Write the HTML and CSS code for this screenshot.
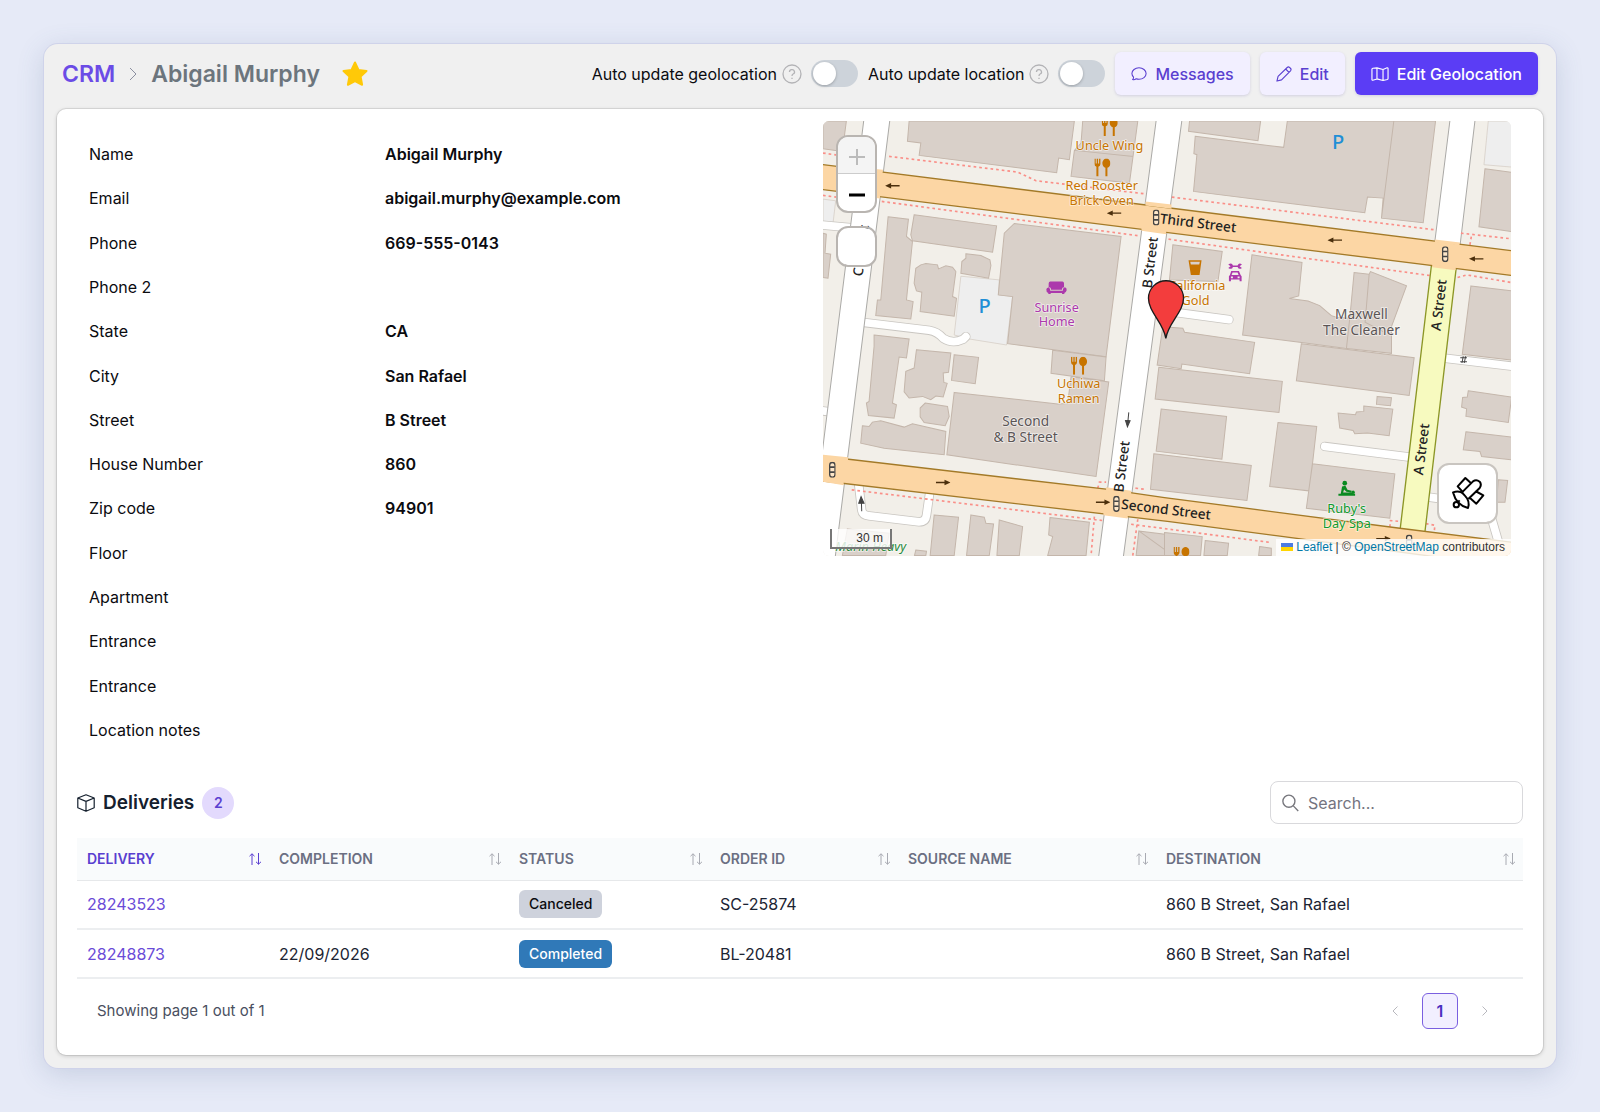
FILE: index.html
```html
<!DOCTYPE html>
<html lang="en">
<head>
<meta charset="utf-8">
<title>CRM - Abigail Murphy</title>
<link rel="stylesheet" href="styles.css">
</head>
<body>
<svg class="defs" aria-hidden="true">
  <symbol id="sort" viewBox="0 0 12 12"><path class="up" d="M3 12V.8M.5 3.200 3 .8l2.500 2.400"/><path class="down" d="M9.500 0v11.200M7 8.800l2.500 2.400L12 8.800"/></symbol>
  <symbol id="fork" viewBox="0 0 48 54"><path d="M0 0h4v15h3V0h4v15h3V0h4v17q0 6-6 8v29H6V25q-6-2-6-8zM36 0c8 0 12 8 12 15 0 6-4 11-9 13v26h-6V28c-5-2-9-7-9-13C24 8 28 0 36 0z"/></symbol>
  <symbol id="signal" viewBox="0 0 20 48"><rect x="2" y="2" width="16" height="44" rx="8" fill="#fff" fill-opacity=".4" stroke="#444" stroke-width="4"/><path d="M3 16h14M3 31h14" stroke="#444" stroke-width="5"/></symbol>
  <symbol id="arrow" viewBox="0 0 44 20"><path d="M12 10h32" stroke="#4b2f0c" stroke-width="4"/><path d="M0 10 18 2v16z" fill="#4b2f0c"/></symbol>
</svg>
<main class="shell">
  <header class="topbar">
    <nav class="crumbs" aria-label="Breadcrumb">
      <a class="crumb-link" href="#">CRM</a>
      <svg class="crumb-sep" viewBox="0 0 8 14"><path d="m1 1 6 6-6 6"/></svg>
      <h1 class="crumb-title">Abigail Murphy</h1>
      <svg class="star" viewBox="0 0 26 26"><path d="M13 1.500 16.500 9l8 1-5.900 5.600 1.500 8.200L13 20l-7.100 3.800 1.500-8.200L1.500 10l8-1z"/></svg>
    </nav>
    <div class="actions">
      <div class="switch-field">
        <label for="geo">Auto update geolocation</label>
        <svg class="help" viewBox="0 0 20 20"><circle cx="10" cy="10" r="9"/><path d="M7.500 8a2.500 2.300 0 1 1 3.600 2q-1.100.600-1.100 1.900M10 13.700v1.200"/></svg>
        <input class="switch" type="checkbox" id="geo">
      </div>
      <div class="switch-field">
        <label for="loc">Auto update location</label>
        <svg class="help" viewBox="0 0 20 20"><circle cx="10" cy="10" r="9"/><path d="M7.500 8a2.500 2.300 0 1 1 3.600 2q-1.100.600-1.100 1.900M10 13.700v1.200"/></svg>
        <input class="switch" type="checkbox" id="loc">
      </div>
      <button class="btn" type="button"><svg class="btn-icon" viewBox="0 0 18 16"><path d="M1.800 14.300c.8-.8 1.200-1.700 1.100-2.800C1.700 10.300 1 9 1 7.500 1 3.900 4.600 1 9 1s8 2.900 8 6.500S13.400 14 9 14c-1.100 0-2.200-.2-3.200-.6-1.200.9-2.600 1.300-4 .9z"/></svg>Messages</button>
      <button class="btn" type="button"><svg class="btn-icon" viewBox="0 0 17 17"><path d="M1 16l1.200-5L11.900 1.600q1.300-1.200 2.700.1l.7.700q1.300 1.400.1 2.700L5.900 14.700zM10.300 3.200l3.500 3.500"/></svg>Edit</button>
      <button class="btn btn-primary" type="button"><svg class="btn-icon map-glyph" viewBox="0 0 19 15"><path d="M1 2.500q0-1 1-1.100L6.300 1l6.400 1.700L17 1q1-.2 1 .8v10.400q0 .8-.8 1.100l-4.500 1-6.400-1.600-4.400 1.400Q1 14.200 1 13.300zM6.300 1v11.700M12.700 2.700v11.600"/></svg>Edit Geolocation</button>
    </div>
  </header>

  <section class="panel">
    <div class="overview">
      <dl class="details">
        <div class="field"><dt>Name</dt><dd>Abigail Murphy</dd></div>
        <div class="field"><dt>Email</dt><dd>abigail.murphy@example.com</dd></div>
        <div class="field"><dt>Phone</dt><dd>669-555-0143</dd></div>
        <div class="field"><dt>Phone 2</dt><dd></dd></div>
        <div class="field"><dt>State</dt><dd>CA</dd></div>
        <div class="field"><dt>City</dt><dd>San Rafael</dd></div>
        <div class="field"><dt>Street</dt><dd>B Street</dd></div>
        <div class="field"><dt>House Number</dt><dd>860</dd></div>
        <div class="field"><dt>Zip code</dt><dd>94901</dd></div>
        <div class="field"><dt>Floor</dt><dd></dd></div>
        <div class="field"><dt>Apartment</dt><dd></dd></div>
        <div class="field"><dt>Entrance</dt><dd></dd></div>
        <div class="field"><dt>Entrance</dt><dd></dd></div>
        <div class="field"><dt>Location notes</dt><dd></dd></div>
      </dl>

      <div class="map">
        <svg class="map-canvas" viewBox="12 9 2061 1302">
          <g class="lot">
            <path d="M12 243 50 248 42 315 12 312zM425 474 540 485 538 530 580 535 562 680 450 662 405 650zM2005 9H2075V147L1992 140z"/>
          </g>
          <g class="building">
            <path d="M12 9H82L70 100 12 92zM270 9 265 70 305 75 300 112 712 164 718 120 750 125 765 9zM790 9 785 75 765 97 755 175 930 195 955 9zM765 97 942 115"/>
            <path d="M12 345 22 348 18 405 35 408 27 480 12 478z"/>
            <path d="M207 296 268 303 262 355 280 370 262 545 282 550 275 602 170 592 175 545 185 545z"/>
            <path d="M285 290 532 323 520 402 280 368 275 350z"/>
            <path d="M305 440 320 436 355 440 358 452 380 443 400 447 410 460 400 535 412 540 405 594 303 580 308 522 292 518 285 495 290 450z"/>
            <path d="M440 407 485 412 512 425 515 442 508 480 425 465 428 430 440 420z"/>
            <path d="M585 316 905 355 860 715 565 676 580 535 537 530 555 345z"/>
            <path d="M700 696 860 716 855 787 695 765zM405 822 715 857 745 855 755 775 868 791 830 1074 383 1009z"/>
            <path d="M165 650 270 662 262 719 240 716 220 854 232 859 225 899 148 891 142 854 150 849 165 684z"/>
            <path d="M292 694 395 704 388 762 372 764 374 792 384 795 372 836 350 833 335 844 310 834 270 839 255 820 260 759 285 749z"/>
            <path d="M405 709 478 717 468 796 397 786z"/>
            <path d="M318 854 385 864 390 894 378 922 315 912 303 895 303 869z"/>
            <path d="M130 922 150 924 160 911 185 907 255 926 280 916 380 939 375 1009 195 989 125 974z"/>
            <path d="M345 1189 418 1196 405 1311H333zM455 1189 495 1196 500 1214 523 1216 510 1311H442zM540 1204 610 1224 600 1311H533zM692 1197 810 1211 800 1311H685L700 1254 688 1249zM958 1237 1060 1250 1050 1311H950zM958 1237 1045 1300M85 1231 210 1244 200 1311H70zM290 1294 322 1298 320 1311H286z"/>
            <path d="M1030 625 1090 630 1095 642 1305 672 1290 766 1087 737 1085 751 1013 740z"/>
            <path d="M1018 747 1388 789 1378 882 1007 842zM1025 872 1221 894 1207 1022 1010 998zM1003 1006 1295 1041 1282 1146 993 1112z"/>
            <path d="M1375 912 1491 924 1478 1039 1467 1117 1350 1104zM1478 1036 1725 1066 1710 1199 1460 1169z"/>
            <path d="M1297 410 1447 433 1437 533 1409 541 1465 548 1500 562 1535 592 1550 597 1590 600 1603 463 1648 468 1652 460 1760 503 1715 625V705L1575 690 1440 672 1269 650z"/>
            <path class="edge" d="M1648 468 1636 612 1690 640M1580 690 1590 600"/>
            <path d="M1445 676 1783 718 1768 831 1430 787z"/>
            <path d="M1672 834 1715 838 1712 862 1670 858zM1632 863 1719 872 1708 952 1643 944 1605 946 1600 936 1560 929 1555 884 1607 889 1610 881 1632 879z"/>
            <path d="M1953 503 2075 518V725L1927 708z"/>
            <path d="M1945 817 2075 836 2065 912 1938 894 1940 871 1925 866 1928 837 1942 836zM1938 940 2075 956V1024L1985 1014 1980 999 1930 994zM2035 1084 2063 1086 2055 1151H2030z"/>
            <path d="M1110 9 1107 40 1315 68 1323 9zM1127 55 1392 88 1403 9H1847L1810 314 1685 300 1690 240 1643 237 1635 284 1122 220 1132 110 1123 107zM1722 9 1685 300"/>
            <path d="M1995 152 2075 163V340L1977 326z"/>
            <path d="M1060 380 1208 400 1195 490 1050 485z"/>
            <path d="M1035 1242 1148 1254 1143 1311H1035zM1157 1266 1227 1274 1223 1311H1153zM1320 1284 1355 1289V1311H1317z"/>
          </g>
          <g class="minor-case"><path d="M130 612 330 636Q355 640 372 660 400 678 432 663L440 655"/><path d="M1035 578 1228 604M1515 984 1770 1016M1860 718 2080 744M1800 1132 1900 1146M2015 1200 2050 1320M118 1090 128 1175Q130 1190 150 1192L300 1210Q320 1210 322 1190L332 1120M0 320 110 330M0 876 60 884"/></g>
          <g class="minor"><path d="M130 612 330 636Q355 640 372 660 400 678 432 663L440 655"/><path d="M1035 578 1228 604M1515 984 1770 1016M1860 718 2080 744M1800 1132 1900 1146M2015 1200 2050 1320M118 1090 128 1175Q130 1190 150 1192L300 1210Q320 1210 322 1190L332 1120M0 320 110 330M0 876 60 884"/></g>
          <g class="street">
            <path d="M135 0H213L48 1320H-30zM1011 0H1088L911 1320H837zM1891 0H1966L1920 385H1843z"/>
          </g>
          <g class="foot">
            <path d="M12 105 60 112M210 115 595 162 650 188 975 227M12 232 60 238M188 250 960 353M1057 237 1845 335M1047 363 1830 472M1923 345 2075 362M1950 380 1955 350M1913 478 1940 470 2075 493"/>
            <path d="M98 1114 850 1206M835 1109 840 1091 860 1091M948 1109 975 1112M935 1217 1355 1272M825 1194 815 1311M955 1202 940 1311M1710 1225 1712 1206 1735 1208M1818 1215 1845 1220 1843 1240"/>
          </g>
          <path class="yellow" d="M1836 430 1740 1240 1814 1250 1910 440z"/>
          <path class="orange" d="M0 138 2085 399V473L0 213zM0 1012 860 1112 1035 1137 1740 1229 2085 1272V1346L1375 1252 1050 1209 0 1086z"/>
          <path class="junction" d="M1056 259V272L978 262V250zM1920 373 1918 382 1845 373V364zM1040 336 1040 348 966 338V328zM1908 446 1907 456 1837 447V438zM935 1117V1130L860 1118V1106zM925 1189V1200L852 1190V1180zM192 155 190 166 118 157V148zM183 230V241L108 232V222zM87 1016V1028L12 1019V1009zM74 1088V1100L12 1090V1082z"/>

          <use href="#arrow" x="198" y="193" width="44" height="20"/>
          <use href="#arrow" x="862" y="275" width="44" height="20"/>
          <use href="#arrow" x="1523" y="356" width="44" height="20"/>
          <use href="#arrow" x="1947" y="412" width="44" height="20"/>
          <use href="#arrow" x="-394" y="-1102" width="44" height="20" transform="rotate(180)"/>
          <use href="#arrow" x="-873" y="-1161" width="44" height="20" transform="rotate(180)"/>
          <use href="#arrow" x="-1713" y="-1270" width="44" height="20" transform="rotate(180)"/>
          <path class="tick" d="M928 882 925 912M918 906 924 925 932 907zM128 1178 127 1150M119 1154 126 1134 135 1154zM1921 718H1941M1921 730H1941M1926 734 1930 714M1933 734 1937 714"/>
          <use href="#signal" x="1000" y="274" width="20" height="48"/>
          <use href="#signal" x="1866" y="384" width="20" height="48"/>
          <use href="#signal" x="30" y="1030" width="20" height="48"/>
          <use href="#signal" x="881" y="1132" width="20" height="48"/>
          <use href="#signal" x="1758" y="1248" width="20" height="48"/>

          <g class="food">
            <use href="#fork" x="847" y="0" width="48" height="54"/>
            <use href="#fork" x="825" y="121" width="48" height="54"/>
            <use href="#fork" x="755" y="715" width="48" height="54"/>
            <use href="#fork" x="1062" y="1285" width="48" height="54"/>
            <path d="M1107 426H1146L1140 470H1114zM1112 431 1114 439H1139L1141 431z" fill-rule="evenodd"/>
          </g>
          <g class="shop">
            <path d="M693 490H729Q734 490 734 496V508H738Q742 508 742 516 740 522 735 524V527H728V524H694V527H687V524Q680 521 681 513 682 508 688 508V496Q688 490 693 490z"/>
            <path class="seat-line" d="M690 508Q694 509 694 516H729Q729 509 733 508"/>
            <path d="M1226 439Q1237 432 1240 442H1254Q1258 432 1267 439L1260 444 1267 449Q1258 456 1254 446H1240Q1237 456 1226 449L1233 444zM1235 458H1258L1263 470 1266 474V489H1260V484H1234V489H1228V474L1231 470zM1239 463 1236 470H1257L1254 463zM1234 475V480H1240V475zM1254 475V480H1260V475z" fill-rule="evenodd"/>
          </g>
          <g class="spa"><circle cx="1575" cy="1094" r="7"/><path d="M1567 1104 1577 1102 1583 1114 1596 1117 1595 1122 1580 1120 1573 1113 1570 1122H1592L1606 1126V1132H1556V1126H1563z"/><circle cx="1600" cy="1121" r="5"/></g>

          <g class="poi food-text">
            <text x="870" y="96">Uncle Wing</text>
            <text x="847" y="216">Red Rooster</text>
            <text x="847" y="260">Brick Oven</text>
            <text x="778" y="809">Uchiwa</text>
            <text x="778" y="853">Ramen</text>
            <text x="1132" y="515">California</text>
            <text x="1128" y="559">Gold</text>
          </g>
          <g class="poi shop-text"><text x="712" y="580">Sunrise</text><text x="712" y="624">Home</text></g>
          <g class="poi spa-text"><text x="1581" y="1183">Ruby's</text><text x="1581" y="1227">Day Spa</text></g>
          <g class="poi place"><text x="619" y="924">Second</text><text x="619" y="972">&amp; B Street</text><text x="1625" y="603">Maxwell</text><text x="1625" y="651">The Cleaner</text></g>
          <g class="parking"><text x="496" y="583">P</text><text x="1555" y="93">P</text></g>
          <text class="poi park" x="155" y="1297">Marin Heavy</text>
          <g class="road-name">
            <text transform="translate(1134 329) rotate(7)">Third Street</text>
            <text transform="translate(1038 1187) rotate(7)">Second Street</text>
            <text transform="translate(1006 435) rotate(-83)">B Street</text>
            <text transform="translate(921 1046) rotate(-83)">B Street</text>
            <text transform="translate(1871 562) rotate(-83)">A Street</text>
            <text transform="translate(1819 994) rotate(-83)">A Street</text>
            <text transform="translate(140 399) rotate(-83)">C Street</text>
          </g>
          <path class="pin" d="M1039 660C1032 613 987 582 987 540A52 52 0 0 1 1092 540C1092 582 1046 613 1039 660z"/>
        </svg>
        <div class="zoom-box">
          <button class="zoom-btn is-off" type="button" aria-label="Zoom in"><svg viewBox="0 0 16 16"><path d="M8 0v16M0 8h16"/></svg></button>
          <button class="zoom-btn" type="button" aria-label="Zoom out"><svg viewBox="0 0 16 16"><path d="M0 8h16"/></svg></button>
        </div>
        <button class="blank-box" type="button" aria-label="Fullscreen"></button>
        <button class="sat-box" type="button" aria-label="Satellite view"><svg viewBox="860 417 102 102"><path d="M897 467 880 448 903 423 922 440M893 466 926 433Q936 426 946 434 953 443 946 453L912 486M933 462 957 475 936 500 917 483"/><path d="M866 466Q888 458 901 475 918 492 911 513 876 505 866 466z"/><circle cx="876" cy="503" r="8"/><path d="M880 496 886 490"/></svg></button>
        <div class="scale">30 m</div>
        <div class="credit"><svg class="flag" viewBox="0 0 12 8"><path fill="#4c7be1" d="M0 0h12v4H0z"/><path fill="#ffd500" d="M0 4h12v4H0z"/></svg> <a href="#">Leaflet</a> | © <a href="#">OpenStreetMap</a> contributors</div>
      </div>
    </div>

    <section class="deliveries">
      <div class="list-head">
        <svg class="box-icon" viewBox="0 0 18 18"><path d="M9 .8 17.200 4v9.700L9 17.200.8 13.700V4zM.8 4 9 7.400 17.200 4M9 7.400v9.800"/></svg>
        <h2 class="list-title">Deliveries</h2>
        <span class="count">2</span>
        <div class="search">
          <svg class="search-icon" viewBox="0 0 16 17"><circle cx="6.500" cy="6.800" r="5.700"/><path d="m10.700 11.200 4.600 4.800"/></svg>
          <input class="search-input" type="text" placeholder="Search..." aria-label="Search deliveries">
        </div>
      </div>
      <table class="table">
        <colgroup><col class="c-delivery"><col class="c-completion"><col class="c-status"><col class="c-order"><col class="c-source"><col></colgroup>
        <thead>
          <tr>
            <th><button class="sort is-active" type="button">DELIVERY<svg><use href="#sort"/></svg></button></th>
            <th><button class="sort" type="button">COMPLETION<svg><use href="#sort"/></svg></button></th>
            <th><button class="sort" type="button">STATUS<svg><use href="#sort"/></svg></button></th>
            <th><button class="sort" type="button">ORDER ID<svg><use href="#sort"/></svg></button></th>
            <th><button class="sort" type="button">SOURCE NAME<svg><use href="#sort"/></svg></button></th>
            <th><button class="sort" type="button">DESTINATION<svg><use href="#sort"/></svg></button></th>
          </tr>
        </thead>
        <tbody>
          <tr><td><a href="#">28243523</a></td><td></td><td><span class="tag">Canceled</span></td><td>SC-25874</td><td></td><td>860 B Street, San Rafael</td></tr>
          <tr><td><a href="#">28248873</a></td><td>22/09/2026</td><td><span class="tag tag-done">Completed</span></td><td>BL-20481</td><td></td><td>860 B Street, San Rafael</td></tr>
        </tbody>
      </table>
      <footer class="pager">
        <span>Showing page 1 out of 1</span>
        <div class="pages">
          <button class="page" type="button" aria-label="Previous"><svg viewBox="0 0 6 10"><path d="M5.500.5 1 5l4.500 4.500"/></svg></button>
          <button class="page is-current" type="button">1</button>
          <button class="page" type="button" aria-label="Next"><svg viewBox="0 0 6 10"><path d="M.5.5 5 5 .5 9.500"/></svg></button>
        </div>
      </footer>
    </section>
  </section>
</main>
</body>
</html>
```
FILE: styles.css
```css
* { box-sizing: border-box; }
body {
  margin: 0;
  padding: 44px;
  background: #e6eaf7;
  color: #0b0b0f;
  font: 16px/24px Inter, sans-serif;
}
button, input { font: inherit; color: inherit; }
button { border: 0; padding: 0; background: none; }
a { text-decoration: none; color: #6a4bd8; }
svg { display: block; fill: none; stroke: currentColor; flex: none; }
.defs { position: absolute; width: 0; height: 0; }

.shell {
  padding: 0 13px 13px;
  border-radius: 14px;
  background: #f0f0f0;
  box-shadow: 0 0 0 1px #cfd3ea, 0 6px 28px rgba(70, 95, 140, .2);
}
.topbar {
  display: flex;
  justify-content: space-between;
  align-items: flex-start;
  padding: 8px 5px 14px;
}
.crumbs { display: flex; align-items: center; height: 43px; }
.crumb-link, .crumb-title { font-size: 23px; line-height: 32px; font-weight: 600; margin: 0; }
.crumb-link { color: #6b4be6; }
.crumb-title { color: #6c757d; }
.crumb-sep { width: 8px; height: 14px; margin: 0 14px; color: #8b8fa0; }
.star { width: 26px; height: 26px; margin-left: 22px; fill: #ffc908; stroke: #ffc908; stroke-width: 2; stroke-linejoin: round; }
.actions { display: flex; align-items: center; gap: 10px; }
.switch-field { display: flex; align-items: center; }
.help { width: 20px; height: 20px; margin: 0 9px 0 5px; color: #b3b3b6; stroke-width: 1.3; }
.switch {
  appearance: none;
  width: 47px;
  height: 27px;
  margin: 0;
  padding: 2px;
  border-radius: 14px;
  background: #cdd3da;
}
.switch::before {
  content: "";
  display: block;
  width: 23px;
  height: 23px;
  border-radius: 50%;
  background: #fff;
  box-shadow: 0 1px 3px rgba(0, 0, 0, .25);
}
.btn {
  display: flex;
  align-items: center;
  gap: 8px;
  height: 43px;
  padding: 0 16px;
  border-radius: 6px;
  background: #f2efff;
  color: #5a3fd0;
  font-weight: 500;
  box-shadow: 0 1px 3px rgba(90, 80, 160, .2);
}
.btn-icon { width: 16px; height: 16px; stroke-width: 1.2; stroke-linejoin: round; }
.btn-primary { background: #5b3df5; color: #fff; }
.map-glyph { width: 18px; }

.panel {
  padding: 12px 20px 26px;
  border-radius: 9px;
  background: #fff;
  box-shadow: 0 0 0 1px rgba(0, 0, 0, .08), 0 1px 4px rgba(0, 0, 0, .18);
}
.overview { display: grid; grid-template-columns: 746fr 688fr; padding-right: 12px; }
.details {
  display: grid;
  grid-auto-rows: 1fr;
  min-height: 620px;
  margin: 11px 0 29px;
  padding-left: 12px;
}
.field { display: grid; grid-template-columns: 296px 1fr; align-items: center; }
.field dd { margin: 0; font-weight: 600; }

.map { position: relative; align-self: start; border-radius: 6px; overflow: hidden; }
.map-canvas { width: 100%; height: auto; background: #f2efe9; stroke: none; font-family: "Noto Sans", sans-serif; }
.lot { fill: #eee; stroke: #d2c9c0; stroke-width: 2; }
.building { fill: #d9d0c9; stroke: #c4b6ab; stroke-width: 3; }
.edge { fill: none; }
.minor, .minor-case { fill: none; stroke-linecap: round; stroke-linejoin: round; }
.minor-case { stroke: #c9c6c1; stroke-width: 28; }
.minor { stroke: #fff; stroke-width: 23; }
.street { fill: #fff; stroke: #aaa9a6; stroke-width: 3; }
.foot { fill: none; stroke: #fa8f88; stroke-width: 5; stroke-dasharray: 8 9; }
.yellow { fill: #f7fabf; stroke: #8c9626; stroke-width: 4; }
.orange { fill: #fcd6a4; stroke: #a37a28; stroke-width: 4; }
.junction { fill: #fcd6a4; }
.tick { fill: #444; stroke: #444; stroke-width: 3; }
.food { fill: #c77400; }
.shop { fill: #ac39ac; }
.seat-line { fill: none; stroke: #d9d0c9; stroke-width: 3; }
.spa { fill: #0a8a20; }
.poi { text-anchor: middle; font-size: 38px; stroke: #fff; stroke-opacity: .6; stroke-width: 5; paint-order: stroke; }
.food-text { fill: #c77400; }
.shop-text { fill: #ac39ac; }
.spa-text { fill: #109a2c; }
.place { fill: #5b5555; font-size: 41px; }
.park { fill: #2a8a3c; font-style: italic; }
.parking { fill: #1f8fd6; font-size: 60px; font-weight: 500; text-anchor: middle; }
.road-name { text-anchor: middle; fill: #222; font-size: 41px; font-weight: 500; }
.pin { fill: #f33d3d; stroke: #1a1a1a; stroke-width: 4; }

.zoom-box, .blank-box, .sat-box {
  position: absolute;
  border: 2px solid #b9b5b1;
  background: #fff;
  background-clip: padding-box;
}
.zoom-box { left: 13px; top: 14px; width: 41px; border-radius: 12px; overflow: hidden; }
.zoom-btn { display: grid; place-items: center; width: 100%; height: 37px; padding-top: 4px; color: #000; }
.zoom-btn svg { width: 16px; height: 16px; stroke-width: 3; }
.zoom-btn.is-off { background: #f4f4f4; color: #bbb; border-bottom: 1px solid #ccc; }
.zoom-btn.is-off svg { stroke-width: 2; }
.blank-box { left: 13px; top: 105px; width: 41px; height: 41px; border-radius: 12px; }
.sat-box { right: 13px; bottom: 32px; width: 61px; height: 61px; border-radius: 12px; border-color: #c9c5c0; display: grid; place-items: center; color: #000; }
.sat-box svg { width: 34px; height: 34px; stroke-width: 6; stroke-linejoin: round; }
.scale {
  position: absolute;
  left: 7px;
  bottom: 7px;
  width: 62px;
  padding-right: 7px;
  border: 2px solid #777;
  border-top: 0;
  background: rgba(255, 255, 255, .8);
  font: 12px/18px "Liberation Sans", sans-serif;
  text-align: right;
  color: #333;
}
.credit {
  position: absolute;
  right: 0;
  bottom: 0;
  padding: 0 6px 0 5px;
  background: rgba(255, 255, 255, .8);
  font: 12px/17px "Liberation Sans", sans-serif;
  color: #333;
}
.credit a { color: #0078a8; }
.flag { display: inline-block; width: 12px; height: 8px; stroke: none; }

.list-head { display: flex; align-items: center; height: 43px; margin-bottom: 14px; color: #15202e; }
.box-icon { width: 18px; height: 18px; stroke-width: 1.2; stroke-linejoin: round; }
.list-title { margin: 0 8px; font-size: 19px; line-height: 24px; font-weight: 600; }
.count { width: 32px; border-radius: 50%; background: #e3dafd; color: #5a3fd0; font-size: 14px; line-height: 32px; font-weight: 600; text-align: center; }
.search { display: flex; align-items: center; gap: 9px; width: 253px; height: 43px; margin-left: auto; padding: 0 11px; border: 1px solid #d9d9dc; border-radius: 8px; }
.search-icon { width: 17px; height: 18px; color: #77777d; stroke-width: 1.3; }
.search-input { width: 100%; min-width: 0; border: 0; padding: 0; outline: 0; background: none; }
.search-input::placeholder { color: #747480; opacity: 1; }

.table { width: 100%; table-layout: fixed; border-collapse: collapse; color: #1c2433; }
.c-delivery { width: 192px; }
.c-completion { width: 240px; }
.c-status { width: 201px; }
.c-order { width: 188px; }
.c-source { width: 258px; }
.table th { height: 42px; padding: 0 8px 0 10px; background: #f9fbfc; border-bottom: 1px solid #e6e8ea; }
.sort { display: flex; justify-content: space-between; align-items: center; width: 100%; color: #6b6f82; font-size: 14px; line-height: 20px; font-weight: 600; }
.sort svg { width: 12px; height: 12px; color: #a8aab2; }
.sort.is-active, .sort.is-active svg { color: #5a3fd0; }
.is-active .down { opacity: .5; }
.table td { height: 49px; padding: 0 10px; border-bottom: 2px solid #eceef0; }
.tag { display: inline-block; padding: 0 10px; border-radius: 6px; background: #ced2dc; color: #0b0b0f; font-size: 14px; line-height: 28px; font-weight: 500; }
.tag-done { background: #3079b8; color: #fff; }
.pager { display: flex; justify-content: space-between; align-items: center; margin-top: 14px; padding: 0 20px; color: #4a4f60; font-size: 15px; }
.pages { display: flex; gap: 9px; }
.page { display: grid; place-items: center; width: 36px; height: 36px; border-radius: 6px; color: #b8b8be; }
.page svg { width: 6px; height: 10px; }
.is-current { border: 1px solid #7a5fe0; background: #f2efff; color: #4a2fc0; font-size: 16px; font-weight: 600; }
```
